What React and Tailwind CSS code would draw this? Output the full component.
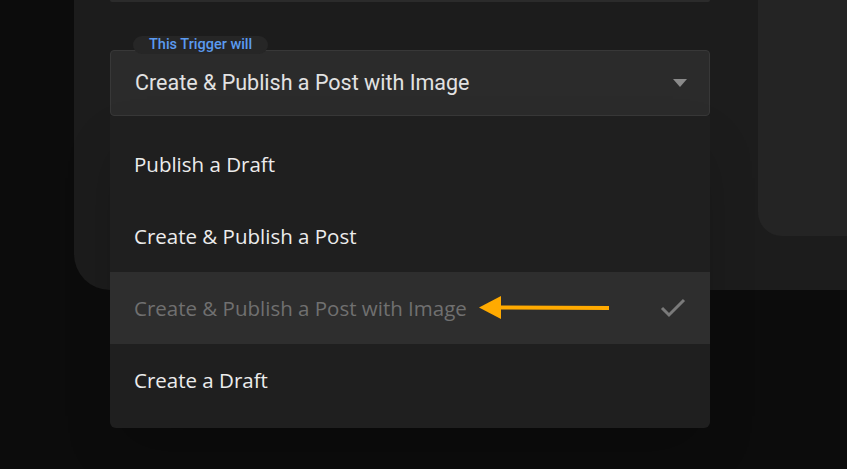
export default function App() {
  const items = ["Publish a Draft", "Create & Publish a Post", "Create & Publish a Post with Image", "Create a Draft"];
  return (
    <div className="w-[847px] h-[469px] bg-[#0c0c0c] overflow-hidden relative" style={{ fontFamily: "Roboto, sans-serif" }}>
      <div className="ml-[74px] h-[290px] bg-[#1c1c1c] rounded-bl-[36px] flex">
        <div className="w-[684px] relative">
          <div className="ml-[36px] w-[600px] h-[2px] bg-[#2b2b2b] rounded-b" />
          <div className="ml-[36px] mt-[48px] w-[600px] relative">
            <div className="absolute left-[23px] -top-[14px] px-4 h-[18px] rounded-full bg-[#262626] text-[14.5px] font-medium text-[#5b9bf0] leading-[18px]">This Trigger will</div>
            <div className="h-[66px] bg-[#2b2b2b] border border-[#383838] rounded flex items-center justify-between pl-6 pr-[22px]">
              <span className="text-[21.5px] text-[#e2e2e2]">Create &amp; Publish a Post with Image</span>
              <svg width="14" height="8" viewBox="0 0 14 8"><path d="M0 0h14L7 8z" fill="#8a8a8a" /></svg>
            </div>
          </div>
        </div>
        <div className="flex-1 h-[236px] bg-[#242424] rounded-bl-[24px]" />
      </div>
      <div className="absolute left-[110px] top-[116px] w-[600px] h-[312px] bg-[#1f1f1f] rounded-b-md shadow-2xl pt-3" style={{ fontFamily: "'Open Sans', sans-serif" }}>
        {items.map((t, i) => (
          <div key={t} className={`h-[72px] flex items-center justify-between pl-6 pr-6 text-[20.5px] ${i === 2 ? "bg-[#2e2e2e] text-[#707070]" : "text-[#ececec]"}`}>
            <div className="flex items-center gap-3">
              <span>{t}</span>
              {i === 2 && (
                <svg width="132" height="24" viewBox="0 0 132 24"><path d="M20 11.5L130 12" stroke="#ffaa00" strokeWidth="4" /><path d="M0 11.5L22 0v23z" fill="#ffaa00" /></svg>
              )}
            </div>
            {i === 2 && (
              <svg width="26" height="20" viewBox="0 0 26 20"><path d="M2 10l7 7L24 2" stroke="#7a7a7a" strokeWidth="3" fill="none" /></svg>
            )}
          </div>
        ))}
      </div>
    </div>
  );
}
